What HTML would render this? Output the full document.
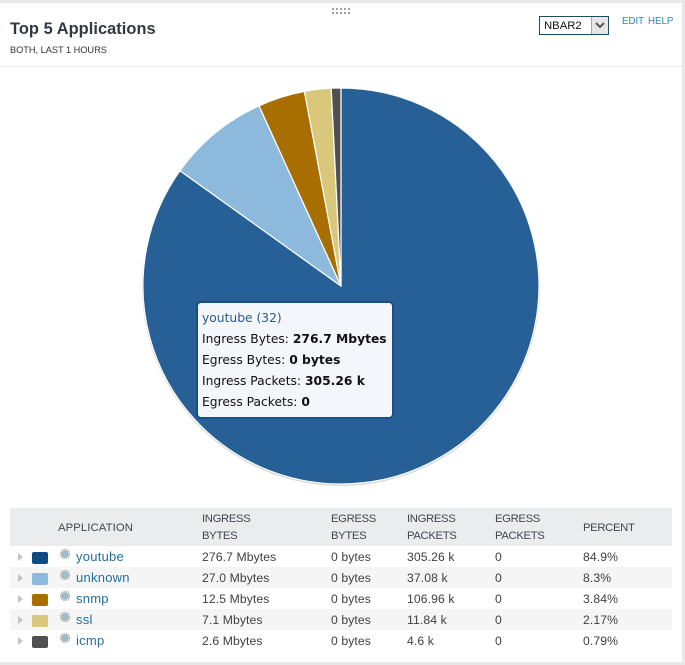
<!DOCTYPE html>
<html><head><meta charset="utf-8">
<style>
html,body{margin:0;padding:0;background:#fff}
body{width:685px;height:665px;position:relative;overflow:hidden;font-family:"Liberation Sans",sans-serif;color:#333}
.a{position:absolute;white-space:nowrap}
.bar{position:absolute;background:#e8e8e8}
.row{position:absolute;left:10px;width:662px;height:21px}
.t{position:absolute;font-size:12.2px;line-height:21px;margin-top:1px;white-space:nowrap;color:#404040;letter-spacing:.1px}
.h{position:absolute;font-size:11.3px;line-height:17px;margin-top:1px;color:#3f4650;white-space:nowrap;letter-spacing:-.35px}
.l{color:#1f6f9f;font-size:13px;letter-spacing:.25px;margin-top:0}
.sw{position:absolute;left:32px;width:16px;height:12px;border-radius:2px}
.tri{position:absolute;left:18px;width:0;height:0;border-left:5px solid #c4c4c4;border-top:4.5px solid transparent;border-bottom:4.5px solid transparent}
.tip{position:absolute;left:196px;top:301px;width:194px;height:114px;background:#f3f6fa;border:2px solid #17507f;border-radius:5px;font-family:"DejaVu Sans",sans-serif;font-size:12.3px;color:#111}
.tip div{position:absolute;left:4px;white-space:nowrap;line-height:21px}
</style></head><body>
<div class="bar" style="left:0;top:0;width:685px;height:3px"></div>
<div class="bar" style="left:682px;top:0;width:3px;height:665px"></div>
<div class="bar" style="left:0;top:662px;width:685px;height:3px"></div>
<div class="bar" style="left:0;top:66px;width:682px;height:1px"></div>

<svg class="a" style="left:332px;top:8px" width="18" height="6"><g fill="#a0a0a0"><rect x="0" y="0" width="2" height="2"/><rect x="4" y="0" width="2" height="2"/><rect x="8" y="0" width="2" height="2"/><rect x="12" y="0" width="2" height="2"/><rect x="16" y="0" width="2" height="2"/><rect x="0" y="4" width="2" height="2"/><rect x="4" y="4" width="2" height="2"/><rect x="8" y="4" width="2" height="2"/><rect x="12" y="4" width="2" height="2"/><rect x="16" y="4" width="2" height="2"/></g></svg>

<div class="a" style="left:10px;top:18px;font-size:16.4px;font-weight:bold;color:#33383f;line-height:22px;letter-spacing:.05px">Top 5 Applications</div>
<div class="a" style="left:10px;top:43px;font-size:9.2px;color:#333;line-height:14px">BOTH, LAST 1 HOURS</div>

<div class="a" style="left:539px;top:16px;width:68px;height:17px;border:1px solid #1f4a5f;background:#fff"></div>
<div class="a" style="left:544px;top:18px;font-size:11.3px;line-height:17px;color:#111">NBAR2</div>
<div class="a" style="left:591px;top:17px;width:16px;height:17px;background:#e6e6e6;border-left:1px solid #aaa"></div>
<svg class="a" style="left:595px;top:22px" width="10" height="7"><path d="M1 1 L5 5 L9 1" fill="none" stroke="#555" stroke-width="2"/></svg>
<div class="a" style="left:622px;top:15px;font-size:9.7px;color:#2f86b5;line-height:13px">EDIT</div>
<div class="a" style="left:648px;top:15px;font-size:9.7px;color:#2f86b5;line-height:13px">HELP</div>

<svg class="a" style="left:0;top:0" width="685" height="500">
<circle cx="341" cy="287" r="199" fill="#d9d9d9"/>
<g stroke="#fff" stroke-width="1.2" stroke-linejoin="round">
<path d="M341 286 L341 88 A198 198 0 1 1 180 170.7 Z" fill="#266097"/>
<path d="M341 286 L180 170.7 A198 198 0 0 1 259 105.8 Z" fill="#8db9dc"/>
<path d="M341 286 L259 105.8 A198 198 0 0 1 304.4 91.4 Z" fill="#a86f00"/>
<path d="M341 286 L304.4 91.4 A198 198 0 0 1 331.2 88.2 Z" fill="#d9c87c"/>
<path d="M341 286 L331.2 88.2 A198 198 0 0 1 341 88 Z" fill="#515151"/>
</g>
</svg>

<div class="tip">
<div style="top:5px;color:#2c5a8c">youtube (32)</div>
<div style="top:26px">Ingress Bytes: <b>276.7 Mbytes</b></div>
<div style="top:47px">Egress Bytes: <b>0 bytes</b></div>
<div style="top:68px">Ingress Packets: <b>305.26 k</b></div>
<div style="top:89px">Egress Packets: <b>0</b></div>
</div>

<div class="a" style="left:10px;top:508px;width:662px;height:38px;background:#ebecee"></div>
<div class="h" style="left:58px;top:519px;letter-spacing:.1px">APPLICATION</div>
<div class="h" style="left:202px;top:510px">INGRESS<br>BYTES</div>
<div class="h" style="left:331px;top:510px">EGRESS<br>BYTES</div>
<div class="h" style="left:407px;top:510px">INGRESS<br>PACKETS</div>
<div class="h" style="left:495px;top:510px">EGRESS<br>PACKETS</div>
<div class="h" style="left:583px;top:519px">PERCENT</div>

<div class="row" style="top:567px;background:#f5f5f5"></div>
<div class="row" style="top:609px;background:#f5f5f5"></div>

<svg width="0" height="0" style="position:absolute"><defs><g id="g"><circle cx="5" cy="5" r="3.8" fill="#aab3b6"/><circle cx="5" cy="5" r="4.6" fill="none" stroke="#aab3b6" stroke-width="1.4" stroke-dasharray="1.5 1"/><circle cx="5" cy="5" r="2.1" fill="#8fc3d6"/></g></defs></svg>

<div class="tri" style="top:553px"></div><div class="sw" style="top:552px;background:#0f4a80"></div>
<svg class="a" style="left:60px;top:549px" width="10" height="10"><use href="#g"/></svg>
<div class="t l" style="left:76px;top:546px">youtube</div>
<div class="t" style="left:202px;top:546px">276.7 Mbytes</div><div class="t" style="left:331px;top:546px">0 bytes</div><div class="t" style="left:407px;top:546px">305.26 k</div><div class="t" style="left:495px;top:546px">0</div><div class="t" style="left:583px;top:546px">84.9%</div>

<div class="tri" style="top:574px"></div><div class="sw" style="top:573px;background:#8db9dc"></div>
<svg class="a" style="left:60px;top:570px" width="10" height="10"><use href="#g"/></svg>
<div class="t l" style="left:76px;top:567px">unknown</div>
<div class="t" style="left:202px;top:567px">27.0 Mbytes</div><div class="t" style="left:331px;top:567px">0 bytes</div><div class="t" style="left:407px;top:567px">37.08 k</div><div class="t" style="left:495px;top:567px">0</div><div class="t" style="left:583px;top:567px">8.3%</div>

<div class="tri" style="top:595px"></div><div class="sw" style="top:594px;background:#a86f00"></div>
<svg class="a" style="left:60px;top:591px" width="10" height="10"><use href="#g"/></svg>
<div class="t l" style="left:76px;top:588px">snmp</div>
<div class="t" style="left:202px;top:588px">12.5 Mbytes</div><div class="t" style="left:331px;top:588px">0 bytes</div><div class="t" style="left:407px;top:588px">106.96 k</div><div class="t" style="left:495px;top:588px">0</div><div class="t" style="left:583px;top:588px">3.84%</div>

<div class="tri" style="top:616px"></div><div class="sw" style="top:615px;background:#d9c87c"></div>
<svg class="a" style="left:60px;top:612px" width="10" height="10"><use href="#g"/></svg>
<div class="t l" style="left:76px;top:609px">ssl</div>
<div class="t" style="left:202px;top:609px">7.1 Mbytes</div><div class="t" style="left:331px;top:609px">0 bytes</div><div class="t" style="left:407px;top:609px">11.84 k</div><div class="t" style="left:495px;top:609px">0</div><div class="t" style="left:583px;top:609px">2.17%</div>

<div class="tri" style="top:637px"></div><div class="sw" style="top:636px;background:#515151"></div>
<svg class="a" style="left:60px;top:633px" width="10" height="10"><use href="#g"/></svg>
<div class="t l" style="left:76px;top:630px">icmp</div>
<div class="t" style="left:202px;top:630px">2.6 Mbytes</div><div class="t" style="left:331px;top:630px">0 bytes</div><div class="t" style="left:407px;top:630px">4.6 k</div><div class="t" style="left:495px;top:630px">0</div><div class="t" style="left:583px;top:630px">0.79%</div>
</body></html>
